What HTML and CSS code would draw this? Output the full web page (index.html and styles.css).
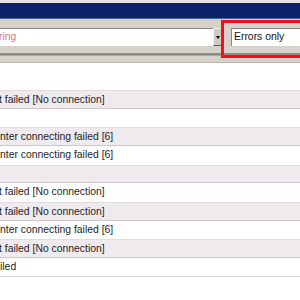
FILE: index.html
```html
<!DOCTYPE html>
<html>
<head>
<meta charset="utf-8">
<link rel="stylesheet" href="styles.css">
</head>
<body>
<div class="top-edge"></div>
<div class="titlebar"></div>
<div class="toolbar">
  <div class="filter-row">
    <div class="filter-input"><span class="hint">ring</span></div>
    <div class="drop-btn"><span class="arrow"></span></div>
    <div class="gap"></div>
    <div class="combo">Errors only</div>
  </div>
  <div class="sep"></div>
  <div class="highlight"></div>
</div>
<div class="list">
  <div class="row blank"></div>
  <div class="row alt"><span class="cut1">t failed [No connection]</span></div>
  <div class="row"></div>
  <div class="row alt"><span>nter connecting failed [6]</span></div>
  <div class="row"><span>nter connecting failed [6]</span></div>
  <div class="row alt"></div>
  <div class="row"><span class="cut1">t failed [No connection]</span></div>
  <div class="row alt"><span class="cut1">t failed [No connection]</span></div>
  <div class="row"><span>nter connecting failed [6]</span></div>
  <div class="row alt"><span class="cut1">t failed [No connection]</span></div>
  <div class="row last"><span class="cut2">iled</span></div>
</div>
</body>
</html>
```
FILE: styles.css
```css
html, body {
  margin: 0;
  padding: 0;
  background: #ffffff;
  width: 300px;
  height: 300px;
  overflow: hidden;
  font-family: "Liberation Sans", Arial, sans-serif;
  font-size: 10.4px;
  color: #1e1e1e;
}

.top-edge {
  height: 3px;
  background: #e6e4e0;
}

.titlebar {
  height: 15px;
  background: #0a236a;
  border-bottom: 1px solid #4763a3;
}

.toolbar {
  position: relative;
  height: 44px;
  background: #d6d2ca;
  padding-top: 9px;
  box-sizing: border-box;
  border-bottom: 1px solid #bcb8b0;
}

.filter-row {
  display: flex;
  height: 18px;
}

.filter-input {
  width: 213px;
  background: #ffffff;
  border-top: 1px solid #8a8884;
  box-sizing: border-box;
  line-height: 16px;
  overflow: hidden;
}

.hint {
  color: #dc7880;
  margin-left: -1px;
}

.drop-btn {
  width: 9px;
  box-sizing: border-box;
  background: #cfcbc3;
  border-top: 1px solid #f4f2ee;
  border-left: 1px solid #f4f2ee;
  border-right: 1px solid #5c5a56;
  border-bottom: 1px solid #5c5a56;
  display: flex;
  align-items: center;
  justify-content: center;
}

.arrow {
  width: 0;
  height: 0;
  border-left: 2px solid transparent;
  border-right: 2px solid transparent;
  border-top: 3px solid #000000;
  margin-top: 1px;
}

.gap {
  width: 9px;
}

.combo {
  flex: 1;
  background: #ffffff;
  border-top: 1px solid #8a8884;
  border-left: 1px solid #8a8884;
  box-sizing: border-box;
  line-height: 16px;
  padding-left: 2px;
  color: #111111;
}

.sep {
  margin-top: 7px;
  height: 2px;
  background: #8c8a86;
  border-bottom: 1px solid #a8a6a2;
}

.highlight {
  position: absolute;
  left: 221px;
  top: 1px;
  width: 90px;
  height: 38px;
  box-sizing: border-box;
  border: 3px solid #f4101a;
}

.list {
  display: flex;
  flex-direction: column;
}

.row {
  height: 18.67px;
  line-height: 18px;
  box-sizing: border-box;
  white-space: nowrap;
  overflow: hidden;
}

.row.blank {
  height: 27px;
}

.row.alt {
  background: #eeeaee;
  border-top: 1px solid #e0dce0;
  border-bottom: 1px solid #cbc7cb;
}

.row.last {
  border-bottom: 1px solid #dcdadc;
}

.cut1 {
  margin-left: -1px;
}

.cut2 {
  margin-left: 0;
}
```
